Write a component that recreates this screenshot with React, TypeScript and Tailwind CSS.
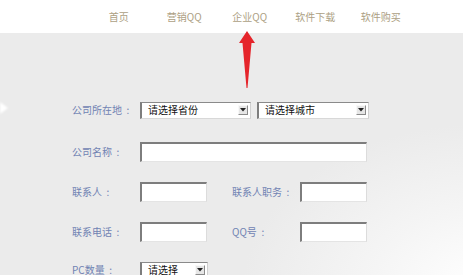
const navItems = ["首页", "营销QQ", "企业QQ", "软件下载", "软件购买"];

function Label({ text }: { text: string }) {
  return (
    <span className="w-[68px] shrink-0 flex text-[10px] leading-none text-[#7183b3]">
      {text}
      <span className="w-[12px] text-center">:</span>
    </span>
  );
}

function TextBox({ width }: { width: string }) {
  return (
    <div
      className={`${width} h-[20px] bg-white border-t-2 border-l-2 border-r border-b border-t-[#7d7d7d] border-l-[#7d7d7d] border-r-[#dcdcdc] border-b-[#e4e4e4]`}
    />
  );
}

function SelectBox({ width, text }: { width: string; text: string }) {
  return (
    <div
      className={`${width} h-[17px] flex items-center justify-between pl-[6px] pr-[2px] bg-white border-t border-l-2 border-r border-b border-t-[#8a8a8a] border-l-[#7d7d7d] border-r-[#d0d0d0] border-b-[#d8d8d8]`}
    >
      <span className="text-[10px] leading-none text-[#111]">{text}</span>
      <span className="w-[10px] h-[10px] flex items-center justify-center bg-[#e6e6e6] border border-t-[#f8f8f8] border-l-[#f8f8f8] border-r-[#8a8a8a] border-b-[#8a8a8a]">
        <svg width="6" height="4" viewBox="0 0 6 4">
          <polygon points="0,0 6,0 3,3.5" fill="#222" />
        </svg>
      </span>
    </div>
  );
}

export default function App() {
  return (
    <div
      className="relative w-[463px] h-[275px] overflow-hidden bg-white"
      style={{ fontFamily: '"Noto Sans CJK SC", "Noto Sans", sans-serif' }}
    >
      <div className="h-[33px] flex items-center pl-[86px] bg-white">
        {navItems.map((item) => (
          <span key={item} className="w-[65.5px] text-center text-[10px] leading-none text-[#ad9f84]">
            {item}
          </span>
        ))}
      </div>

      <div className="h-[242px] pl-[72px] pt-[67px] bg-[radial-gradient(ellipse_70%_90%_at_105%_105%,#ffffff_0%,#f5f5f5_35%,#ebebeb_75%)]">
        <div className="flex items-center h-[20px]">
          <Label text="公司所在地" />
          <SelectBox width="w-[111px]" text="请选择省份" />
          <div className="w-[6px]" />
          <SelectBox width="w-[112px]" text="请选择城市" />
        </div>

        <div className="flex items-center h-[20px] mt-[22px]">
          <Label text="公司名称" />
          <TextBox width="w-[227px]" />
        </div>

        <div className="flex items-center h-[20px] mt-[20px]">
          <Label text="联系人" />
          <TextBox width="w-[67px]" />
          <div className="w-[25px]" />
          <Label text="联系人职务" />
          <TextBox width="w-[67px]" />
        </div>

        <div className="flex items-center h-[20px] mt-[20px]">
          <Label text="联系电话" />
          <TextBox width="w-[67px]" />
          <div className="w-[25px]" />
          <Label text="QQ号" />
          <TextBox width="w-[67px]" />
        </div>

        <div className="flex items-center h-[20px] mt-[18px]">
          <Label text="PC数量" />
          <SelectBox width="w-[68px]" text="请选择" />
        </div>
      </div>

      {/* red pointer arrow */}
      <svg className="absolute left-[237px] top-[31px]" width="20" height="58" viewBox="0 0 20 58">
        <polygon points="10,0 18,12 14.5,12 10.5,57 9.5,57 5.5,12 2,12" fill="#e5252b" />
      </svg>

      {/* faint white arrow at left edge */}
      <svg className="absolute left-0 top-[101px] blur-[1px]" width="10" height="14" viewBox="0 0 10 14">
        <polygon points="0,1 8,7 0,13" fill="#ffffff" />
      </svg>
    </div>
  );
}
